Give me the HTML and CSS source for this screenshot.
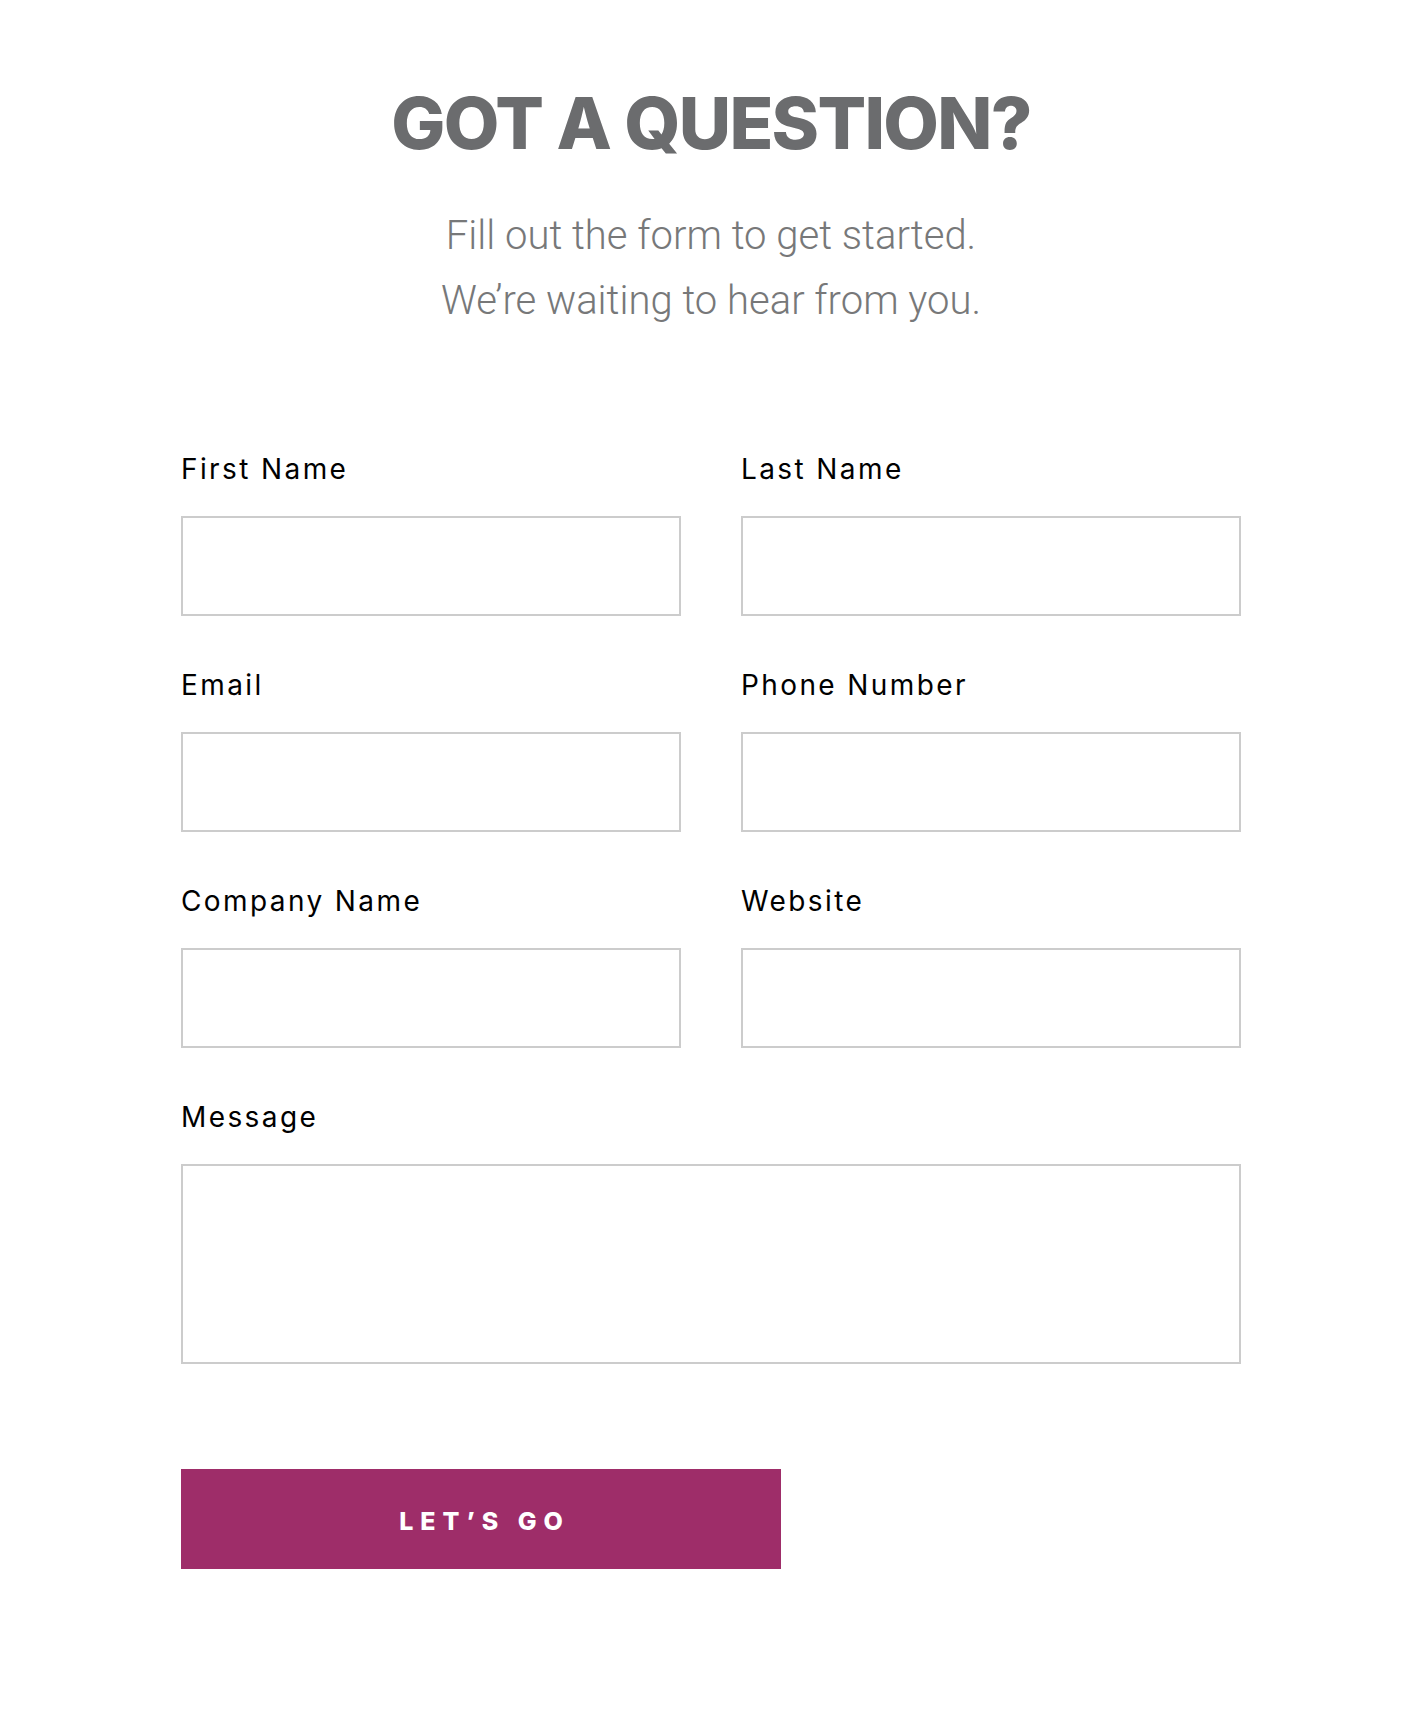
FILE: index.html
```html
<!DOCTYPE html>
<html lang="en">
<head>
<meta charset="utf-8">
<title>Got a question?</title>
<link rel="stylesheet" href="styles.css">
</head>
<body>
<section class="contact">
  <h1 class="title">GOT A QUESTION?</h1>
  <p class="lead">Fill out the form to get started.<br>We’re waiting to hear from you.</p>
  <form class="form">
    <div class="grid">
      <label class="field"><span class="label">First Name</span><input class="input" type="text"></label>
      <label class="field"><span class="label">Last Name</span><input class="input" type="text"></label>
      <label class="field"><span class="label">Email</span><input class="input" type="email"></label>
      <label class="field"><span class="label">Phone Number</span><input class="input" type="tel"></label>
      <label class="field"><span class="label">Company Name</span><input class="input" type="text"></label>
      <label class="field"><span class="label">Website</span><input class="input" type="text"></label>
      <label class="field full"><span class="label">Message</span><textarea class="input textarea"></textarea></label>
    </div>
    <button class="submit" type="button">LET’S GO</button>
  </form>
</section>
</body>
</html>
```
FILE: styles.css
```css
* { box-sizing: border-box; }
html, body { margin: 0; padding: 0; background: #fff; }
body { font-family: "Inter", "Liberation Sans", sans-serif; }

.contact {
  width: 1060px;
  margin: 0 auto;
  padding-top: 80px;
}

.title {
  margin: 0;
  text-align: center;
  font-family: "Inter", sans-serif;
  font-weight: 800;
  font-size: 72px;
  line-height: 86px;
  color: #6b6c6e;
  letter-spacing: -1.7px;
}

.lead {
  margin: 37px 0 0;
  text-align: center;
  font-family: "Roboto", sans-serif;
  font-weight: 300;
  font-size: 40px;
  line-height: 65px;
  color: #777879;
}

.form { margin-top: 118px; }

.grid {
  display: grid;
  grid-template-columns: 1fr 1fr;
  column-gap: 60px;
  row-gap: 51px;
}

.field { display: flex; flex-direction: column; }
.full { grid-column: 1 / -1; }

.label {
  font-family: "Inter", sans-serif;
  font-size: 28px;
  line-height: 36px;
  letter-spacing: 2.4px;
  color: #000;
  margin-bottom: 29px;
}

.input {
  display: block;
  width: 100%;
  height: 100px;
  border: 2px solid #cccccc;
  background: #fff;
  font: inherit;
  padding: 10px 16px;
  outline: none;
}

.textarea { height: 200px; resize: none; }

.submit {
  display: block;
  margin-top: 105px;
  width: 600px;
  height: 100px;
  border: 0;
  background: #9e2d69;
  color: #fff;
  font-family: "Inter", sans-serif;
  font-weight: 800;
  font-size: 25px;
  letter-spacing: 7px;
  padding: 4px 0 0 7px;
  cursor: pointer;
}
```
